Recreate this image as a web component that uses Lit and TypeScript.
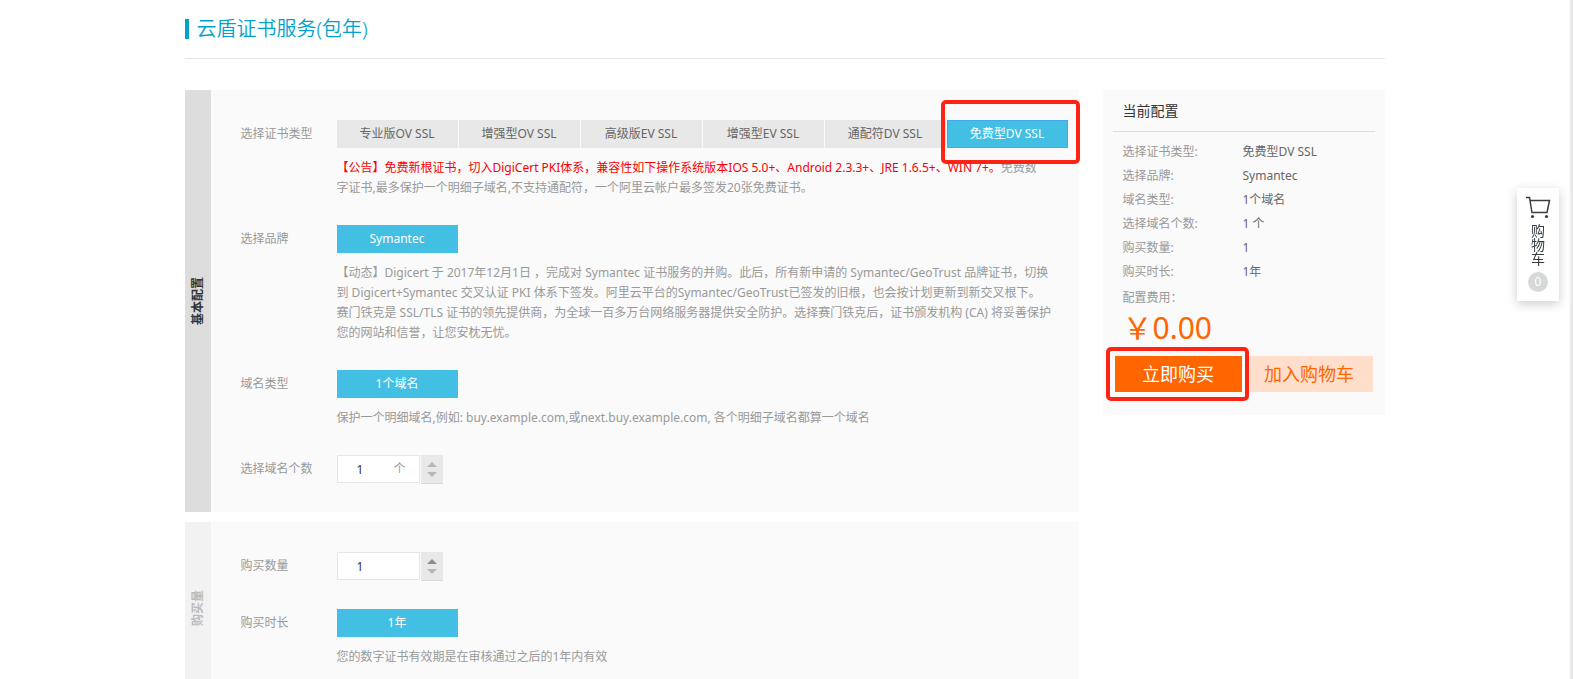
import { LitElement, html, css, nothing } from "lit";
import { customElement, property, state } from "lit/decorators.js";
import { classMap } from "lit/directives/class-map.js";

const TYPES = ["专业版OV SSL", "增强型OV SSL", "高级版EV SSL", "增强型EV SSL", "通配符DV SSL", "免费型DV SSL"];

@customElement("option-group")
class OptionGroup extends LitElement {
  @property({ attribute: false }) options: string[] = [];
  @property() selected = "";
  @property() marked = "";
  @property() label = "";

  static styles = css`
    .group {
      display: flex;
      gap: 1px;
    }
    .slot {
      position: relative;
    }
    .option {
      box-sizing: border-box;
      width: 121px;
      height: 28px;
      padding: 0;
      border: 0;
      background: #e8e8e8;
      color: #666;
      font: inherit;
      cursor: pointer;
    }
    .option.on {
      background: #43bfe3;
      color: #fff;
    }
    .option.focused {
      border: 1px solid #43a9ea;
    }
    .mark {
      position: absolute;
      inset: -20px -12px -16px -6px;
      border: 4px solid #ff2314;
      border-radius: 5px;
      pointer-events: none;
      z-index: 2;
    }
  `;

  render() {
    return html`<div class="group" role="group" aria-label=${this.label}>
      ${this.options.map(
        (o) => html`<div class="slot">
          <button
            type="button"
            class=${classMap({ option: true, on: o === this.selected, focused: o === this.marked })}
            @click=${() => (this.selected = o)}
          >${o}</button>
          ${o === this.marked ? html`<span class="mark"></span>` : nothing}
        </div>`
      )}
    </div>`;
  }
}

@customElement("number-stepper")
class NumberStepper extends LitElement {
  @property({ type: Number }) value = 1;
  @property() unit = "";
  @property() label = "";
  @property({ type: Boolean }) raisable = false;

  static styles = css`
    .stepper {
      display: flex;
      gap: 1px;
      height: 30px;
      align-items: flex-start;
    }
    .box {
      box-sizing: border-box;
      display: flex;
      align-items: center;
      width: 83px;
      height: 28px;
      border: 1px solid #e6e6e6;
      background: #fff;
      color: #999;
    }
    .field {
      width: 56px;
      box-sizing: border-box;
      height: 26px;
      padding: 0 0 0 19px;
      border: 0;
      outline: 0;
      background: none;
      color: #333;
      font: inherit;
    }
    .arrows {
      box-sizing: border-box;
      display: flex;
      flex-direction: column;
      width: 22px;
      height: 29px;
      padding: 4px 0;
      border-bottom: 1px solid #d9d9d9;
      background: #e8e8e8;
    }
    .arrow {
      flex: 1;
      display: grid;
      place-items: center;
      padding: 0;
      border: 0;
      background: none;
      color: #b8b8b8;
    }
    .arrow.live {
      color: #8c8c8c;
    }
  `;

  render() {
    return html`<div class="stepper">
      <label class="box">
        <input class="field" aria-label=${this.label} .value=${String(this.value)} />${this.unit}
      </label>
      <div class="arrows">
        <button type="button" class=${classMap({ arrow: true, live: this.raisable })} aria-label="+" @click=${() => this.value++}>
          <svg width="10" height="5" viewBox="0 0 10 5"><path d="M0 5L5 0L10 5Z" fill="currentColor" /></svg>
        </button>
        <button type="button" class="arrow" aria-label="-" @click=${() => (this.value = Math.max(1, this.value - 1))}>
          <svg width="10" height="5" viewBox="0 0 10 5"><path d="M0 0L5 5L10 0Z" fill="currentColor" /></svg>
        </button>
      </div>
    </div>`;
  }
}

@customElement("app-root")
class AppRoot extends LitElement {
  @state() summary: [string, string][] = [
    ["选择证书类型", "免费型DV SSL"],
    ["选择品牌", "Symantec"],
    ["域名类型", "1个域名"],
    ["选择域名个数", "1 个"],
    ["购买数量", "1"],
    ["购买时长", "1年"],
  ];

  static styles = css`
    :host {
      display: block;
      padding-right: 4px;
      background: #fff;
      color: #999;
      font: 12px/20px "Noto Sans", "Noto Sans CJK SC", sans-serif;
      text-spacing-trim: space-all;
    }
    .page {
      max-width: 1200px;
      margin: 0 auto;
    }
    .head {
      display: flex;
      align-items: center;
      height: 58px;
      border-bottom: 1px solid #e5e5e5;
      margin-bottom: 31px;
    }
    .title {
      margin: 0;
      padding-left: 8px;
      border-left: 4px solid #00a2ca;
      color: #00a2ca;
      font-size: 20px;
      line-height: 20px;
      font-weight: 350;
    }
    .columns {
      display: grid;
      grid-template-columns: minmax(0, 1fr) 282px;
      gap: 24px;
      align-items: start;
    }
    .main {
      display: grid;
      gap: 10px;
    }
    .section {
      display: grid;
      grid-template-columns: 26px minmax(0, 1fr);
      background: #fafafa;
    }
    .strip {
      display: grid;
      place-items: center;
      background: #f2f2f2;
      color: #bbb;
    }
    .strip.dark {
      background: #ddd;
      color: #333;
    }
    .strip h2 {
      margin: 0;
      font-size: 12px;
      line-height: 20px;
      writing-mode: vertical-rl;
      text-orientation: sideways;
      transform: rotate(180deg);
    }
    .rows {
      padding: 30px 10px 0 30px;
    }
    .row {
      display: grid;
      grid-template-columns: 96px minmax(0, 1fr);
      margin-bottom: 27px;
    }
    .name {
      line-height: 28px;
    }
    .desc {
      margin: 10px 0 0;
    }
    .alert {
      color: #f00;
    }
    .side {
      background: #fafafa;
      padding: 0 10px 23px;
    }
    .side h2 {
      margin: 0 0 8px;
      padding: 0 10px;
      border-bottom: 1px solid #ddd;
      color: #333;
      font-size: 14px;
      line-height: 41px;
      font-weight: 400;
    }
    .list {
      display: grid;
      grid-template-columns: 120px 1fr;
      margin: 0;
      padding: 0 10px;
      line-height: 24px;
    }
    .list dd {
      margin: 0;
      color: #666;
    }
    .fee {
      margin: 0;
      padding: 4px 10px 0;
    }
    .price {
      margin: 0;
      padding: 0 10px;
      color: #f60;
      font-size: 30px;
      line-height: 40px;
    }
    .actions {
      display: grid;
      grid-template-columns: 1fr 1fr;
      gap: 4px;
      padding: 8px 2px 0;
    }
    .action {
      position: relative;
    }
    .btn {
      width: 100%;
      height: 36px;
      padding: 0;
      border: 0;
      background: #ffdfcc;
      color: #f60;
      font: inherit;
      font-size: 18px;
    }
    .btn.buy {
      background: #f60;
      color: #fff;
    }
    .mark {
      position: absolute;
      inset: -9px -7px -9px -9px;
      border: 4px solid #ff2314;
      border-radius: 5px;
      pointer-events: none;
      z-index: 2;
    }
    .cart {
      position: fixed;
      top: 188px;
      right: 14px;
      display: flex;
      flex-direction: column;
      align-items: center;
      box-sizing: border-box;
      width: 42px;
      padding: 8px 0 9px;
      background: #fff;
      box-shadow: 0 3px 10px rgba(0, 0, 0, 0.2);
      color: #373d41;
      text-decoration: none;
      font-size: 14px;
      line-height: 14px;
    }
    .words {
      width: 14px;
      margin: 5px 0 6px;
      word-break: break-all;
    }
    .count {
      width: 20px;
      border-radius: 10px;
      background: #d7d8d9;
      color: #fff;
      font-size: 12px;
      line-height: 20px;
      text-align: center;
    }
    .edge {
      position: fixed;
      top: 0;
      right: 0;
      bottom: 0;
      width: 4px;
      background: linear-gradient(to right, #fafafa, #e0e0e0);
    }
  `;

  render() {
    return html`
      <div class="page">
        <header class="head"><h1 class="title">云盾证书服务(包年)</h1></header>
        <div class="columns">
          <main class="main">
            <section class="section">
              <div class="strip dark"><h2>基本配置</h2></div>
              <div class="rows">
                <div class="row">
                  <span class="name">选择证书类型</span>
                  <div>
                    <option-group label="选择证书类型" .options=${TYPES} selected="免费型DV SSL" marked="免费型DV SSL"></option-group>
                    <p class="desc"><span class="alert">【公告】免费新根证书，切入DigiCert PKI体系，兼容性如下操作系统版本IOS 5.0+、Android 2.3.3+、JRE 1.6.5+、WIN 7+。</span>免费数<br />字证书,最多保护一个明细子域名,不支持通配符，一个阿里云帐户最多签发20张免费证书。</p>
                  </div>
                </div>
                <div class="row">
                  <span class="name">选择品牌</span>
                  <div>
                    <option-group label="选择品牌" .options=${["Symantec"]} selected="Symantec"></option-group>
                    <p class="desc">【动态】Digicert 于 2017年12月1日 ，完成对 Symantec 证书服务的并购。此后，所有新申请的 Symantec/GeoTrust 品牌证书，切换<br />到 Digicert+Symantec 交叉认证 PKI 体系下签发。阿里云平台的Symantec/GeoTrust已签发的旧根，也会按计划更新到新交叉根下。<br />赛门铁克是 SSL/TLS 证书的领先提供商，为全球一百多万台网络服务器提供安全防护。选择赛门铁克后，证书颁发机构 (CA) 将妥善保护<br />您的网站和信誉，让您安枕无忧。</p>
                  </div>
                </div>
                <div class="row">
                  <span class="name">域名类型</span>
                  <div>
                    <option-group label="域名类型" .options=${["1个域名"]} selected="1个域名"></option-group>
                    <p class="desc">保护一个明细域名,例如: buy.example.com,或next.buy.example.com, 各个明细子域名都算一个域名</p>
                  </div>
                </div>
                <div class="row">
                  <span class="name">选择域名个数</span>
                  <number-stepper label="选择域名个数" unit="个"></number-stepper>
                </div>
              </div>
            </section>
            <section class="section">
              <div class="strip"><h2>购买量</h2></div>
              <div class="rows">
                <div class="row">
                  <span class="name">购买数量</span>
                  <number-stepper label="购买数量" raisable></number-stepper>
                </div>
                <div class="row">
                  <span class="name">购买时长</span>
                  <div>
                    <option-group label="购买时长" .options=${["1年"]} selected="1年"></option-group>
                    <p class="desc">您的数字证书有效期是在审核通过之后的1年内有效</p>
                  </div>
                </div>
              </div>
            </section>
          </main>
          <aside class="side">
            <h2>当前配置</h2>
            <dl class="list">
              ${this.summary.map(([k, v]) => html`<dt>${k}:</dt><dd>${v}</dd>`)}
            </dl>
            <p class="fee">配置费用：</p>
            <p class="price">￥0.00</p>
            <div class="actions">
              <div class="action">
                <button type="button" class="btn buy">立即购买</button>
                <span class="mark"></span>
              </div>
              <div class="action"><button type="button" class="btn">加入购物车</button></div>
            </div>
          </aside>
        </div>
      </div>
      <a class="cart" href="#cart">
        <svg width="26" height="23" viewBox="0 0 26 23" fill="none" stroke="currentColor" stroke-width="1.5">
          <path d="M1 1.5H4.5L7 16.5H22L24.5 4.5H5" />
          <circle cx="7.5" cy="20.5" r="1.6" fill="currentColor" stroke="none" />
          <circle cx="21.5" cy="20.5" r="1.6" fill="currentColor" stroke="none" />
        </svg>
        <span class="words">购物车</span>
        <span class="count">0</span>
      </a>
      <div class="edge"></div>
    `;
  }
}
